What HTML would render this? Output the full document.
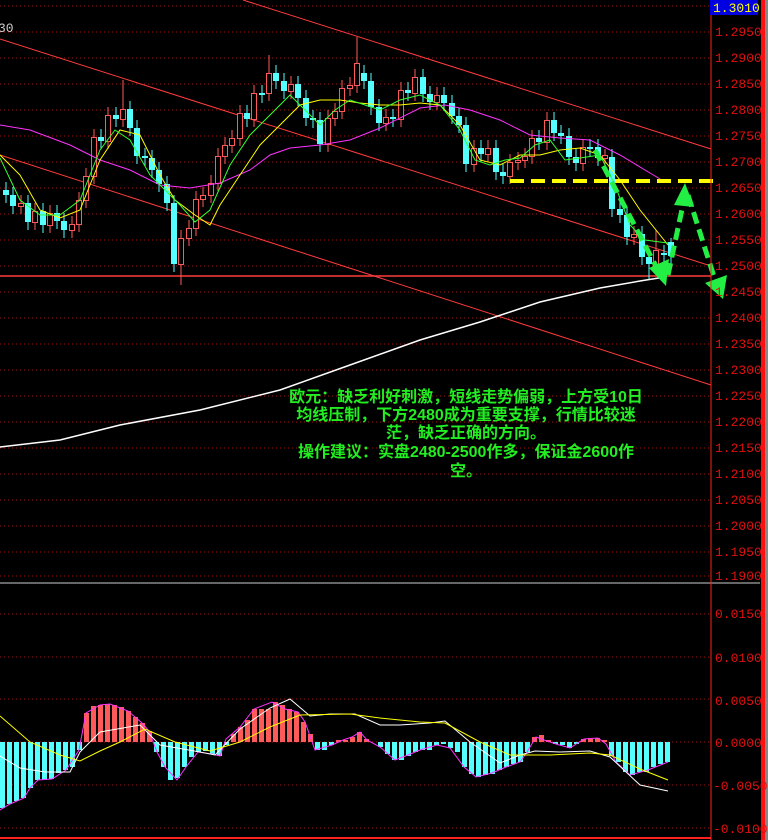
<!DOCTYPE html>
<html><head><meta charset="utf-8"><style>
html,body{margin:0;padding:0;background:#000;width:768px;height:840px;overflow:hidden}
svg{display:block}
.ax{font-family:"Liberation Mono",monospace;font-size:13px;fill:#e01010}
.t{font-family:"Liberation Sans","Noto Sans CJK SC",sans-serif;font-size:16px;font-weight:bold;fill:#22ee22}
</style></head><body>
<svg width="768" height="840" viewBox="0 0 768 840" xmlns="http://www.w3.org/2000/svg">
<rect width="768" height="840" fill="#000"/>
<g stroke="#a01010" stroke-dasharray="1,3" stroke-width="1">
<line x1="0" y1="6" x2="711" y2="6"/><line x1="0" y1="32" x2="711" y2="32"/><line x1="0" y1="58" x2="711" y2="58"/>
<line x1="0" y1="84" x2="711" y2="84"/><line x1="0" y1="110" x2="711" y2="110"/><line x1="0" y1="136" x2="711" y2="136"/>
<line x1="0" y1="162" x2="711" y2="162"/><line x1="0" y1="188" x2="711" y2="188"/><line x1="0" y1="214" x2="711" y2="214"/>
<line x1="0" y1="240" x2="711" y2="240"/><line x1="0" y1="266" x2="711" y2="266"/><line x1="0" y1="292" x2="711" y2="292"/>
<line x1="0" y1="318" x2="711" y2="318"/><line x1="0" y1="344" x2="711" y2="344"/><line x1="0" y1="370" x2="711" y2="370"/>
<line x1="0" y1="396" x2="711" y2="396"/><line x1="0" y1="422" x2="711" y2="422"/><line x1="0" y1="448" x2="711" y2="448"/>
<line x1="0" y1="474" x2="711" y2="474"/><line x1="0" y1="500" x2="711" y2="500"/><line x1="0" y1="526" x2="711" y2="526"/>
<line x1="0" y1="552" x2="711" y2="552"/><line x1="0" y1="576" x2="711" y2="576"/>
<line x1="0" y1="614" x2="711" y2="614"/><line x1="0" y1="657" x2="711" y2="657"/><line x1="0" y1="699" x2="711" y2="699"/>
<line x1="0" y1="742" x2="711" y2="742"/><line x1="0" y1="785" x2="711" y2="785"/><line x1="0" y1="828" x2="711" y2="828"/>
</g>
<g stroke="#ff3c3c" stroke-width="1" fill="none">
<line x1="243" y1="0" x2="711" y2="149"/>
<line x1="0" y1="39" x2="711" y2="266"/>
<line x1="0" y1="155" x2="711" y2="385"/>
<line x1="0" y1="276" x2="711" y2="276" stroke-width="1.5"/>
</g>
<path fill="none" stroke="#55ffff" stroke-width="1" d="M6 182V203M13 187V214M28 195V230M43 203V233M57 205V229M64 213V238M101 129V149M116 107V127M130 101V136M137 120V164M145 148V166M152 150V178M159 162V192M167 176V211M174 195V272M247 105V127M262 85V103M276 65V89M284 73V99M298 76V106M306 90V126M313 110V128M320 112V152M364 65V89M371 73V115M379 99V131M393 109V127M408 82V101M423 69V102M430 86V110M444 87V111M452 95V124M459 108V133M466 117V172M481 140V162M496 140V180M503 164V184M539 130V150M554 112V141M561 125V144M569 128V165M576 149V171M590 139V157M598 139V166M612 149V217M620 201V223M627 207V245M642 226V265M649 249V279M664 245V263M671 238V265"/>
<path fill="none" stroke="#ff5a5a" stroke-width="1" d="M21 195V214M35 203V230M50 205V233M72 216V238M79 192V232M86 168V208M94 129V184M108 107V149M123 80V127M181 230V285M189 220V246M196 191V236M203 187V207M211 175V203M218 148V191M225 137V164M232 130V153M240 105V146M254 85V127M269 55V101M291 76V99M328 110V152M335 103V126M342 80V119M350 77V96M357 37V93M386 109V131M401 82V127M415 69V101M437 87V110M474 140V172M488 140V162M510 154V184M518 152V170M525 148V168M532 130V164M547 112V150M583 139V171M605 149V167M634 226V245M656 230V272"/>
<path fill="#55ffff" d="M3 190h6v5h-6zM10 195h6v11h-6zM25 203h6v19h-6zM40 211h6v14h-6zM54 213h6v8h-6zM61 221h6v9h-6zM98 137h6v4h-6zM113 115h6v4h-6zM127 109h6v19h-6zM134 128h6v28h-6zM142 156h6v2h-6zM149 158h6v12h-6zM156 170h6v14h-6zM164 184h6v19h-6zM171 203h6v61h-6zM244 113h6v6h-6zM259 93h6v2h-6zM273 73h6v8h-6zM281 81h6v10h-6zM295 84h6v14h-6zM303 98h6v20h-6zM310 118h6v2h-6zM317 120h6v24h-6zM361 73h6v8h-6zM368 81h6v26h-6zM376 107h6v16h-6zM390 117h6v2h-6zM405 90h6v3h-6zM420 77h6v17h-6zM427 94h6v8h-6zM441 95h6v8h-6zM449 103h6v13h-6zM456 116h6v9h-6zM463 125h6v39h-6zM478 148h6v6h-6zM493 148h6v24h-6zM500 172h6v4h-6zM536 138h6v4h-6zM551 120h6v13h-6zM558 133h6v3h-6zM566 136h6v21h-6zM573 157h6v6h-6zM587 147h6v2h-6zM595 147h6v11h-6zM609 157h6v52h-6zM617 209h6v6h-6zM624 215h6v22h-6zM639 234h6v23h-6zM646 257h6v7h-6zM661 253h6v2h-6zM668 242h6v14h-6z"/>
<path fill="#000" stroke="#ff5a5a" stroke-width="1" d="M18.5 203.5h5v3h-5zM32.5 211.5h5v11h-5zM47.5 213.5h5v12h-5zM69.5 224.5h5v6h-5zM76.5 200.5h5v24h-5zM83.5 176.5h5v24h-5zM91.5 137.5h5v39h-5zM105.5 115.5h5v26h-5zM120.5 109.5h5v10h-5zM178.5 238.5h5v26h-5zM186.5 228.5h5v10h-5zM193.5 199.5h5v29h-5zM200.5 195.5h5v4h-5zM208.5 183.5h5v12h-5zM215.5 156.5h5v27h-5zM222.5 145.5h5v11h-5zM229.5 138.5h5v7h-5zM237.5 113.5h5v25h-5zM251.5 93.5h5v26h-5zM266.5 73.5h5v20h-5zM288.5 84.5h5v7h-5zM325.5 118.5h5v26h-5zM332.5 111.5h5v7h-5zM339.5 88.5h5v23h-5zM347.5 85.5h5v3h-5zM354.5 63.5h5v22h-5zM383.5 117.5h5v6h-5zM398.5 90.5h5v29h-5zM412.5 77.5h5v16h-5zM434.5 95.5h5v7h-5zM471.5 148.5h5v16h-5zM485.5 148.5h5v6h-5zM507.5 162.5h5v14h-5zM515.5 160.5h5v2h-5zM522.5 156.5h5v4h-5zM529.5 138.5h5v18h-5zM544.5 120.5h5v22h-5zM580.5 147.5h5v16h-5zM602.5 155.5h5v3h-5zM631.5 234.5h5v3h-5zM653.5 250.5h5v14h-5z"/>
<g fill="none">
<polyline stroke="#ffffff" stroke-width="1.5" points="0,447 60,440 120,425 200,410 280,390 350,365 420,340 480,322 540,302 600,288 640,281 665,277"/>
<polyline stroke="#ff33ff" stroke-width="1" points="0,125 30,130 70,145 100,160 130,170 160,185 190,188 220,183 250,170 270,155 290,148 320,145 350,140 380,128 420,108 445,105 470,110 500,120 530,135 560,138 590,140 620,155 645,170 665,182"/>
<polyline stroke="#ffff00" stroke-width="1" points="0,155 20,175 40,210 60,218 80,210 100,160 120,130 140,135 160,175 175,200 195,215 210,225 220,205 240,175 260,145 280,125 300,105 320,100 340,100 360,103 380,105 400,105 420,103 440,105 460,125 480,160 500,165 520,155 540,155 560,150 580,148 600,155 620,180 640,210 660,235 668,245"/>
<polyline stroke="#33ff33" stroke-width="1" points="0,158 20,200 40,215 60,215 80,200 100,150 115,130 130,140 150,175 165,190 180,205 195,222 210,210 230,165 250,135 270,115 290,95 305,110 320,125 335,110 350,100 365,105 380,110 400,100 420,95 440,105 460,130 475,160 490,165 505,160 520,158 535,145 550,140 565,160 580,158 600,155 615,185 630,225 645,240 660,242 668,243"/>
</g>
<path fill="#ff5a5a" d="M84 742v-29h5v29zM91 742v-36h5v36zM98 742v-37h5v37zM105 742v-38h5v38zM112 742v-37h5v37zM119 742v-35h5v35zM126 742v-31h5v31zM133 742v-25h5v25zM140 742v-19h5v19zM147 742v-11h5v11zM231 742v-8h5v8zM238 742v-15h5v15zM245 742v-22h5v22zM252 742v-33h5v33zM259 742v-33h5v33zM266 742v-33h5v33zM273 742v-40h5v40zM280 742v-37h5v37zM287 742v-33h5v33zM294 742v-30h5v30zM301 742v-20h5v20zM308 742v-8h5v8zM336 742v-2h5v2zM343 742v-2h5v2zM350 742v-5h5v5zM357 742v-10h5v10zM364 742v-3h5v3zM532 742v-5h5v5zM539 742v-7h5v7zM546 742v-2h5v2zM581 742v-3h5v3zM588 742v-4h5v4zM595 742v-4h5v4zM602 742v-2h5v2z"/>
<path fill="#55ffff" d="M0 742v66h5v-66zM7 742v62h5v-62zM14 742v59h5v-59zM21 742v56h5v-56zM28 742v46h5v-46zM35 742v38h5v-38zM42 742v38h5v-38zM49 742v37h5v-37zM56 742v31h5v-31zM63 742v28h5v-28zM70 742v25h5v-25zM77 742v8h5v-8zM154 742v10h5v-10zM161 742v25h5v-25zM168 742v38h5v-38zM175 742v36h5v-36zM182 742v25h5v-25zM189 742v15h5v-15zM196 742v10h5v-10zM203 742v9h5v-9zM210 742v12h5v-12zM217 742v14h5v-14zM224 742v3h5v-3zM315 742v8h5v-8zM322 742v8h5v-8zM329 742v3h5v-3zM378 742v5h5v-5zM385 742v12h5v-12zM392 742v18h5v-18zM399 742v18h5v-18zM406 742v14h5v-14zM413 742v10h5v-10zM420 742v8h5v-8zM427 742v8h5v-8zM434 742v3h5v-3zM441 742v2h5v-2zM448 742v6h5v-6zM455 742v10h5v-10zM462 742v25h5v-25zM469 742v32h5v-32zM476 742v35h5v-35zM483 742v33h5v-33zM490 742v32h5v-32zM497 742v28h5v-28zM504 742v25h5v-25zM511 742v22h5v-22zM518 742v20h5v-20zM525 742v10h5v-10zM553 742v2h5v-2zM560 742v3h5v-3zM567 742v6h5v-6zM574 742v2h5v-2zM609 742v14h5v-14zM616 742v20h5v-20zM623 742v30h5v-30zM630 742v33h5v-33zM637 742v30h5v-30zM644 742v30h5v-30zM651 742v25h5v-25zM658 742v22h5v-22zM665 742v20h5v-20z"/>
<g fill="none" stroke-width="1">
<polyline stroke="#ff33ff" points="0,810 10,804 24,798 30,788 38,780 52,779 66,770 79,750 86,713 100,705 110,704 128,711 142,723 149,731 157,752 165,767 177,780 186,767 198,752 212,754 220,756 226,739 240,727 254,709 272,702 285,709 298,712 305,722 315,750 332,745 343,740 352,737 360,732 367,740 380,747 395,760 408,755 420,750 437,745 450,748 464,767 476,777 492,773 506,767 520,762 527,752 536,737 544,740 556,744 570,748 584,739 598,738 606,744 616,762 630,775 648,770 668,762"/>
<polyline stroke="#ffffff" points="0,756 20,768 45,772 70,772 80,752 100,732 140,725 160,745 200,752 215,755 240,729 270,708 290,699 310,716 330,714 355,714 380,725 400,725 430,723 445,721 470,742 500,763 520,755 535,751 560,752 590,751 610,757 640,785 668,791"/>
<polyline stroke="#ffff00" points="0,716 30,742 60,755 80,761 100,751 120,742 145,729 175,742 210,751 240,742 270,727 300,715 350,714 380,718 420,722 445,723 480,742 510,755 550,755 590,753 610,755 640,769 668,780"/>
</g>
<line x1="510" y1="181" x2="713" y2="181" stroke="#ffff00" stroke-width="4" stroke-dasharray="14,7"/>
<g stroke="#22ee44" stroke-width="5" stroke-dasharray="12,6" fill="none">
<line x1="595" y1="150" x2="658" y2="270"/>
<line x1="668" y1="275" x2="684" y2="200"/>
<line x1="688" y1="195" x2="716" y2="283"/>
</g>
<g fill="#22ee44">
<polygon points="666,286 649,268 669,259"/>
<polygon points="685,183 674,205 694,207"/>
<polygon points="723,299 705,283 727,275"/>
</g>
<line x1="0" y1="583" x2="760" y2="583" stroke="#cccccc" stroke-width="1"/>
<line x1="711" y1="0" x2="711" y2="840" stroke="#ff2020" stroke-width="1"/>
<rect x="761" y="0" width="4" height="840" fill="#ff1010"/>
<rect x="765" y="0" width="3" height="840" fill="#888"/>
<line x1="0" y1="838" x2="711" y2="838" stroke="#ff2020" stroke-width="2"/>
<rect x="710" y="0" width="48" height="15" fill="#0000e0"/>
<text x="713" y="12" font-family="Liberation Mono,monospace" font-size="13" fill="#ffff00">1.3010</text>
<g class="ax">
<text x="715" y="36">1.2950</text><text x="715" y="62">1.2900</text><text x="715" y="88">1.2850</text>
<text x="715" y="114">1.2800</text><text x="715" y="140">1.2750</text><text x="715" y="166">1.2700</text>
<text x="715" y="192">1.2650</text><text x="715" y="218">1.2600</text><text x="715" y="244">1.2550</text>
<text x="715" y="270">1.2500</text><text x="715" y="296">1.2450</text><text x="715" y="322">1.2400</text>
<text x="715" y="348">1.2350</text><text x="715" y="374">1.2300</text><text x="715" y="400">1.2250</text>
<text x="715" y="426">1.2200</text><text x="715" y="452">1.2150</text><text x="715" y="478">1.2100</text>
<text x="715" y="504">1.2050</text><text x="715" y="530">1.2000</text><text x="715" y="556">1.1950</text>
<text x="715" y="580">1.1900</text>
<text x="715" y="618">0.0150</text><text x="715" y="662">0.0100</text><text x="715" y="705">0.0050</text>
<text x="715" y="747">0.0000</text><text x="713" y="790">-0.0050</text><text x="713" y="833">-0.0100</text>
</g>
<text x="-2" y="32" font-family="Liberation Mono,monospace" font-size="13" fill="#ccc">30</text>
<g class="t" text-anchor="middle">
<text x="466" y="402">欧元：缺乏利好刺激，短线走势偏弱，上方受10日</text>
<text x="466" y="420">均线压制，下方2480成为重要支撑，行情比较迷</text>
<text x="466" y="438">茫，缺乏正确的方向。</text>
<text x="466" y="457">操作建议：实盘2480-2500作多，保证金2600作</text>
<text x="466" y="476">空。</text>
</g>
</svg>
</body></html>
